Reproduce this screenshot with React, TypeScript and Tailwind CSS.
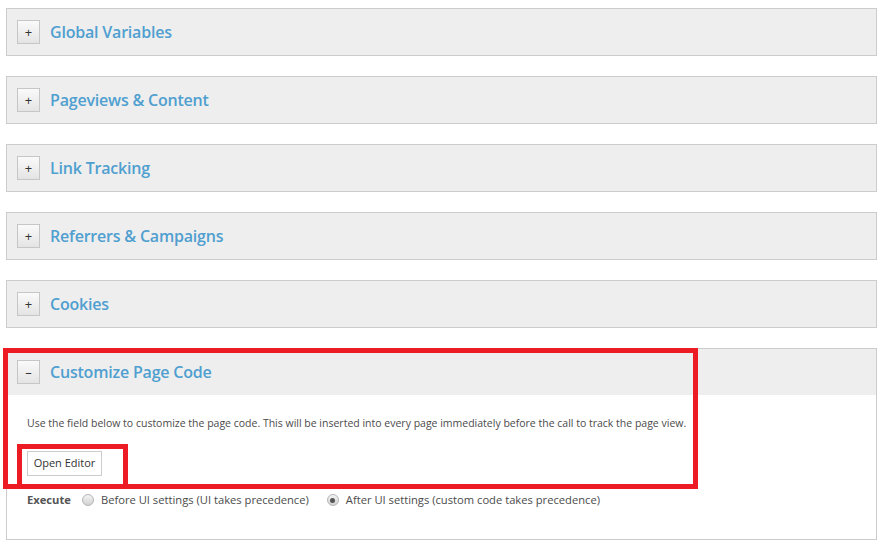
const sections = ["Global Variables", "Pageviews & Content", "Link Tracking", "Referrers & Campaigns", "Cookies"];

const ToggleButton = ({ label }: { label: string }) => (
  <span className="flex h-[24px] w-[23px] shrink-0 items-center justify-center border border-[#c6c6c6] bg-gradient-to-b from-[#fafafa] to-[#e4e4e4] text-[13px] leading-none text-[#333]">
    {label}
  </span>
);

const Radio = ({ checked }: { checked?: boolean }) => (
  <span className="flex h-[12px] w-[12px] shrink-0 items-center justify-center rounded-full border border-[#b4b4b4] bg-gradient-to-b from-[#f4f4f4] to-[#d2d2d2]">
    {checked && <span className="h-[5px] w-[5px] rounded-full bg-[#555]" />}
  </span>
);

export default function App() {
  return (
    <div className="relative h-[550px] w-[877px] overflow-hidden bg-white font-['Open_Sans',sans-serif]">
      <div className="flex flex-col gap-[20px] pl-[6px] pt-[8px]">
        {sections.map((title) => (
          <div key={title} className="flex h-[48px] items-center gap-[10px] border border-[#cccccc] bg-[#eeeeee] pl-[10px]">
            <ToggleButton label="+" />
            <span className="text-[16px] font-semibold tracking-[-0.2px] text-[#4f9fd0]">{title}</span>
          </div>
        ))}
        <div className="flex h-[192px] flex-col border border-[#cccccc]">
          <div className="flex h-[46px] items-center gap-[10px] bg-[#eeeeee] pl-[10px]">
            <ToggleButton label="–" />
            <span className="text-[16px] font-semibold tracking-[-0.2px] text-[#4f9fd0]">Customize Page Code</span>
          </div>
          <div className="flex flex-col items-start pl-[20px] pt-[20px] text-[#4b4b4b]">
            <p className="text-[10.5px] leading-[16px]">
              Use the field below to customize the page code. This will be inserted into every page immediately before the call to track the page view.
            </p>
            <button className="mt-[20px] h-[25px] w-[75px] border border-[#cccccc] bg-white text-[11px] text-[#333]">Open Editor</button>
            <div className="mt-[16px] flex h-[16px] items-center text-[11.2px]">
              <span className="mr-[11px] font-bold text-[#555]">Execute</span>
              <Radio />
              <span className="ml-[7px] mr-[18px]">Before UI settings (UI takes precedence)</span>
              <Radio checked />
              <span className="ml-[7px]">After UI settings (custom code takes precedence)</span>
            </div>
          </div>
        </div>
      </div>
      {/* annotation boxes */}
      <div className="pointer-events-none absolute left-[3px] top-[348px] h-[141px] w-[695px] border-[5px] border-[#ed1c24]" />
      <div className="pointer-events-none absolute left-[17px] top-[444px] h-[45px] w-[111px] border-[5px] border-[#ed1c24]" />
    </div>
  );
}
